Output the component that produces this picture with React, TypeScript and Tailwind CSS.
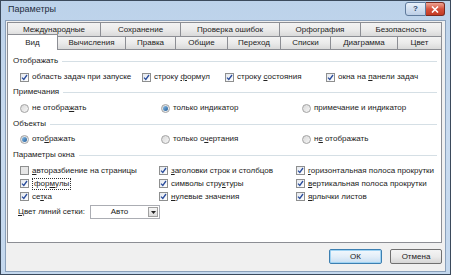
import React from "react";

const font = "font-['Liberation_Sans',Arial,sans-serif]";

// label with one underlined (accelerator) letter
const Lbl = ({ a, u, b }: { a?: string; u: string; b?: string }) => (
  <span>
    {a}
    <span className="underline">{u}</span>
    {b}
  </span>
);

const Check = ({ on = true, disabled = false }: { on?: boolean; disabled?: boolean }) => (
  <span
    className={`mr-[3px] flex h-[9px] w-[9px] shrink-0 items-center justify-center border border-[#8e8f8f] ${
      disabled ? "bg-[#e6e6e6]" : "bg-gradient-to-br from-[#e4e8ee] to-[#ffffff]"
    }`}
  >
    {on && (
      <svg width="7" height="7" viewBox="0 0 7 7">
        <path d="M1 3.6 L2.8 5.5 L6 1" fill="none" stroke="#2a4d9c" strokeWidth="1.3" />
      </svg>
    )}
  </span>
);

const Radio = ({ on = false }: { on?: boolean }) => (
  <span className="mr-[3px] flex h-[9px] w-[9px] shrink-0 items-center justify-center rounded-full border border-[#a3a3a3] bg-gradient-to-br from-[#d8d8d8] to-[#f7f7f7]">
    {on && <span className="h-[5px] w-[5px] rounded-full bg-gradient-to-br from-[#8cc0e8] to-[#1f5d9a]" />}
  </span>
);

const Item = ({ children }: { children: React.ReactNode }) => (
  <div className="flex h-full items-center whitespace-nowrap">{children}</div>
);

const Header = ({ text }: { text: string }) => (
  <div className="flex h-[12px] items-center gap-[4px] pl-[5px] pr-[4px]">
    <span className="whitespace-nowrap">{text}</span>
    <div className="h-px flex-1 bg-[#d5dfe5]" />
  </div>
);

const tabsTop = [
  { t: "Международные", w: 93 },
  { t: "Сохранение", w: 80 },
  { t: "Проверка ошибок", w: 99 },
  { t: "Орфография", w: 81 },
  { t: "Безопасность", w: 82 },
];

const tabsBottom = [
  { t: "Вычисления", w: 67 },
  { t: "Правка", w: 50 },
  { t: "Общие", w: 52 },
  { t: "Переход", w: 53 },
  { t: "Списки", w: 50 },
  { t: "Диаграмма", w: 67 },
  { t: "Цвет", w: 45 },
];

const tabCls =
  "flex items-center justify-center border-l border-t border-[#8c8e94] bg-gradient-to-b from-[#f3f3f3] via-[#ebebeb] to-[#dadada] text-[#222]";

export default function App() {
  return (
    <div
      className={`${font} flex h-[275px] w-[451px] flex-col overflow-hidden border border-[#3b4a5c] bg-gradient-to-b from-[#bcd2ea] via-[#c9dbef] to-[#c4d8ee] text-[8px] leading-none text-[#222]`}
    >
      {/* title bar */}
      <div className="flex h-[19px] shrink-0 items-start">
        <span className="ml-[7px] mt-[4px] text-[9px] text-[#1e2d40]">Параметры</span>
        <div className="ml-auto mr-[5px] mt-[1px] flex">
          <div className="flex h-[14px] w-[21px] items-center justify-center rounded-l-[3px] border border-[#5f7a9c] bg-gradient-to-b from-[#e8f0fa] to-[#bccee6] text-[8px] font-bold text-[#2c4468]">
            ?
          </div>
          <div className="flex h-[14px] w-[19px] items-center justify-center rounded-r-[3px] border border-l-0 border-[#7a2a20] bg-gradient-to-b from-[#eea393] via-[#d5503c] to-[#c33b23]">
            <svg width="8" height="7" viewBox="0 0 8 7">
              <path d="M1 0.5 L7 6.5 M7 0.5 L1 6.5" stroke="#fff" strokeWidth="1.6" />
            </svg>
          </div>
        </div>
      </div>

      {/* client area */}
      <div className="mx-[4px] flex flex-1 flex-col border border-[#8aa0ba] bg-[#f0f0f0] pl-[1px] pr-[3px]">
        {/* tab rows */}
        <div className="mt-[1px] flex h-[14px]">
          {tabsTop.map((t, i) => (
            <div
              key={t.t}
              className={`${tabCls} ${i === tabsTop.length - 1 ? "border-r" : ""}`}
              style={{ width: t.w }}
            >
              {t.t}
            </div>
          ))}
        </div>
        <div className="relative z-10 flex h-[13px] items-end">
          <div className="-mb-px flex h-[16px] w-[51px] items-center justify-center border-l border-r border-t border-[#8c8e94] bg-white">
            Вид
          </div>
          {tabsBottom.map((t, i) => (
            <div
              key={t.t}
              className={`${tabCls} h-[13px] ${i === 0 ? "border-l-0" : ""} ${
                i === tabsBottom.length - 1 ? "border-r" : ""
              }`}
              style={{ width: t.w }}
            >
              {t.t}
            </div>
          ))}
        </div>

        {/* panel */}
        <div className="flex h-[194px] flex-col border border-[#8c8e94] bg-white pt-[5px]">
          <Header text="Отображать" />
          <div className="mt-[4px] flex h-[12px] pl-[12px]">
            <div className="w-[122px]">
              <Item>
                <Check />
                область задач при запуске
              </Item>
            </div>
            <div className="w-[83px]">
              <Item>
                <Check />
                <Lbl a="строку " u="ф" b="ормул" />
              </Item>
            </div>
            <div className="w-[101px]">
              <Item>
                <Check />
                <Lbl a="строку " u="с" b="остояния" />
              </Item>
            </div>
            <Item>
              <Check />
              <Lbl a="окна на " u="п" b="анели задач" />
            </Item>
          </div>

          <div className="mt-[3px]">
            <Header text="Примечания" />
          </div>
          <div className="mt-[4px] flex h-[12px] pl-[12px]">
            <div className="w-[141px]">
              <Item>
                <Radio />
                <Lbl a="не отобра" u="ж" b="ать" />
              </Item>
            </div>
            <div className="w-[141px]">
              <Item>
                <Radio on />
                только индикатор
              </Item>
            </div>
            <Item>
              <Radio />
              <Lbl a="примечание и ин" u="д" b="икатор" />
            </Item>
          </div>

          <div className="mt-[4px]">
            <Header text="Объекты" />
          </div>
          <div className="mt-[3px] flex h-[12px] pl-[12px]">
            <div className="w-[141px]">
              <Item>
                <Radio on />
                <Lbl a="ото" u="б" b="ражать" />
              </Item>
            </div>
            <div className="w-[141px]">
              <Item>
                <Radio />
                <Lbl a="только о" u="ч" b="ертания" />
              </Item>
            </div>
            <Item>
              <Radio />
              <Lbl a="н" u="е" b=" отображать" />
            </Item>
          </div>

          <div className="mt-[4px]">
            <Header text="Параметры окна" />
          </div>
          <div className="mt-[3px] grid grid-cols-[139px_137px_1fr] grid-rows-[13px_13px_13px] pl-[12px]">
            <Item>
              <Check on={false} disabled />
              <Lbl u="а" b="вторазбиение на страницы" />
            </Item>
            <Item>
              <Check />
              <Lbl u="з" b="аголовки строк и столбцов" />
            </Item>
            <Item>
              <Check />
              <Lbl u="г" b="оризонтальная полоса прокрутки" />
            </Item>
            <Item>
              <Check />
              <span className="border border-dotted border-[#333] px-px py-[1px]">
                <Lbl a="фор" u="м" b="улы" />
              </span>
            </Item>
            <Item>
              <Check />
              <Lbl a="символы стру" u="к" b="туры" />
            </Item>
            <Item>
              <Check />
              <Lbl u="в" b="ертикальная полоса прокрутки" />
            </Item>
            <Item>
              <Check />
              <Lbl a="се" u="т" b="ка" />
            </Item>
            <Item>
              <Check />
              <Lbl u="н" b="улевые значения" />
            </Item>
            <Item>
              <Check />
              <Lbl u="я" b="рлычки листов" />
            </Item>
          </div>

          <div className="mt-[2px] flex h-[14px] items-center pl-[10px]">
            <span className="w-[72px] whitespace-nowrap">
              <Lbl u="Ц" b="вет линий сетки:" />
            </span>
            <div className="flex h-[14px] w-[70px] items-center border border-[#abadb3] bg-white">
              <span className="flex-1 text-center">Авто</span>
              <div className="mr-[1px] flex h-[10px] w-[10px] items-center justify-center border border-[#a0a0a0] bg-gradient-to-b from-[#f6f6f6] to-[#dcdcdc]">
                <svg width="5" height="3" viewBox="0 0 5 3">
                  <path d="M0 0 H5 L2.5 3 Z" fill="#222" />
                </svg>
              </div>
            </div>
          </div>
        </div>

        {/* buttons */}
        <div className="mt-[6px] flex justify-end gap-[8px]">
          <button className="flex h-[15px] w-[53px] items-center justify-center rounded-[2px] border border-[#3c7fb1] bg-gradient-to-b from-[#f2f8fd] via-[#e3eef8] to-[#c7def2] shadow-[inset_0_0_0_1px_#9fd3f3]">
            ОК
          </button>
          <button className="flex h-[15px] w-[52px] items-center justify-center rounded-[2px] border border-[#707070] bg-gradient-to-b from-[#f4f4f4] via-[#ebebeb] to-[#d6d6d6]">
            Отмена
          </button>
        </div>
      </div>
      <div className="h-[2px] shrink-0" />
    </div>
  );
}
